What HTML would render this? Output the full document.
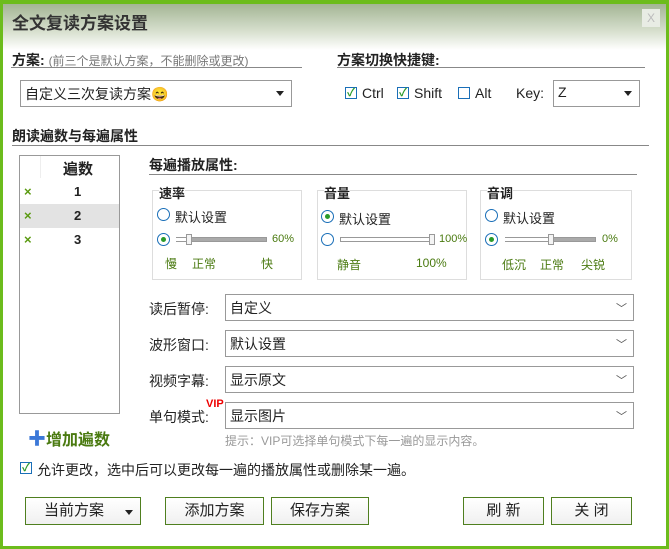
<!DOCTYPE html>
<html><head><meta charset="utf-8"><style>
*{box-sizing:border-box;margin:0;padding:0}
body{width:669px;height:549px;overflow:hidden;background:#fff;font-family:"Liberation Sans","Noto Sans CJK SC",sans-serif;font-size:13px;color:#222;position:relative}
.a{position:absolute;white-space:nowrap}
#frame{position:absolute;left:0;top:0;width:669px;height:549px;border:3px solid #6cbc1c;border-top-width:4px}
#title{position:absolute;left:3px;top:4px;width:663px;height:46px;background:linear-gradient(#a3b594,#d8e0cf 60%,#fff)}
.hl{position:absolute;height:1px;background:#888}
.dd{position:absolute;border:1px solid #999;background:#fff;font-size:14px;padding:3px 4px}
.dd .tri{position:absolute;right:7px;top:10px;width:0;height:0;border-left:4px solid transparent;border-right:4px solid transparent;border-top:5px solid #222}
.dd .chev{position:absolute;right:6px;top:5px;color:#555;font-size:11px}
.cb{position:absolute;width:12px;height:12px;border:1px solid #1a6fb8;background:#fff;color:#2a9a2a;font-size:11px;line-height:10px;text-align:center;font-weight:bold}
.grp{position:absolute;border:1px solid #ddd}
.rb{position:absolute;width:13px;height:13px;border:1px solid #1a6fb8;border-radius:50%;background:#fff}
.rb.on::after{content:"";position:absolute;left:3px;top:3px;width:5px;height:5px;border-radius:50%;background:#2a9a2a}
.sl{position:absolute;height:5px;border:1px solid #999;background:#aaa}
.th{position:absolute;width:6px;height:11px;border:1px solid #999;background:#f4f4f4}
.g{color:#4a7a10;font-size:12px}
.btn{position:absolute;top:497px;height:28px;border:1px solid #4f7f1f;background:linear-gradient(#fff,#f0f0f0);font-size:15px;text-align:center;line-height:26px}
</style></head><body>
<div id="title"></div>
<div class="a" style="left:12px;top:9px;font-size:17px;font-weight:bold;color:#333">全文复读方案设置</div>
<div class="a" style="left:642px;top:9px;width:18px;height:18px;background:#e8ece4;color:#bbb;font-size:12px;text-align:center;line-height:18px">X</div>

<div class="a" style="left:12px;top:50px;font-size:14px"><b>方案:</b> <span style="color:#777;font-size:12px">(前三个是默认方案，不能删除或更改)</span></div>
<div class="hl" style="left:11px;top:67px;width:291px"></div>
<div class="a" style="left:337px;top:50px;font-weight:bold;font-size:14px">方案切换快捷键:</div>
<div class="hl" style="left:337px;top:67px;width:308px"></div>

<div class="dd" style="left:20px;top:80px;width:272px;height:27px">自定义三次复读方案😄<span class="tri"></span></div>
<div class="cb" style="left:345px;top:87px">✓</div><div class="a" style="left:362px;top:85px;font-size:14px">Ctrl</div>
<div class="cb" style="left:397px;top:87px">✓</div><div class="a" style="left:414px;top:85px;font-size:14px">Shift</div>
<div class="cb" style="left:458px;top:87px"></div><div class="a" style="left:475px;top:85px;font-size:14px">Alt</div>
<div class="a" style="left:516px;top:85px;font-size:14px">Key:</div>
<div class="dd" style="left:553px;top:80px;width:87px;height:27px">Z<span class="tri"></span></div>

<div class="a" style="left:12px;top:126px;font-weight:bold;font-size:14px">朗读遍数与每遍属性</div>
<div class="hl" style="left:12px;top:145px;width:637px"></div>

<div class="a" style="left:19px;top:155px;width:101px;height:259px;border:1px solid #999"></div>
<div class="a" style="left:40px;top:156px;width:1px;height:22px;background:#eee"></div>
<div class="a" style="left:63px;top:158px;font-weight:bold;font-size:15px">遍数</div>
<div class="a" style="left:20px;top:204px;width:99px;height:24px;background:#e3e3e3"></div>
<div class="a" style="left:24px;top:184px;color:#5a9a10;font-weight:bold">×</div><div class="a" style="left:74px;top:184px;font-weight:bold">1</div>
<div class="a" style="left:24px;top:208px;color:#5a9a10;font-weight:bold">×</div><div class="a" style="left:74px;top:208px;font-weight:bold">2</div>
<div class="a" style="left:24px;top:232px;color:#5a9a10;font-weight:bold">×</div><div class="a" style="left:74px;top:232px;font-weight:bold">3</div>

<div class="a" style="left:28px;top:425px;color:#4a7a10;font-weight:bold;font-size:16px"><span style="color:#3b78d8;font-size:18px">✚</span>增加遍数</div>

<div class="a" style="left:149px;top:155px;font-weight:bold;font-size:14px">每遍播放属性:</div>
<div class="hl" style="left:149px;top:174px;width:488px"></div>

<div class="grp" style="left:152px;top:190px;width:150px;height:90px"></div>
<div class="a" style="left:159px;top:183px;font-weight:bold;background:#fff">速率</div>
<div class="rb" style="left:157px;top:208px"></div><div class="a" style="left:175px;top:207px">默认设置</div>
<div class="rb on" style="left:157px;top:233px"></div>
<div class="sl" style="left:176px;top:237px;width:91px"></div><div class="a" style="left:176px;top:238px;width:10px;height:3px;background:#fff"></div><div class="th" style="left:186px;top:234px"></div>
<div class="a g" style="left:272px;top:233px;font-size:11px">60%</div>
<div class="a g" style="left:165px;top:255px">慢</div><div class="a g" style="left:192px;top:255px">正常</div><div class="a g" style="left:261px;top:255px">快</div>

<div class="grp" style="left:317px;top:190px;width:150px;height:90px"></div>
<div class="a" style="left:324px;top:183px;font-weight:bold;background:#fff">音量</div>
<div class="rb on" style="left:321px;top:210px"></div><div class="a" style="left:339px;top:209px">默认设置</div>
<div class="rb" style="left:321px;top:233px"></div>
<div class="sl" style="left:340px;top:237px;width:92px;background:#fff"></div><div class="th" style="left:429px;top:234px"></div>
<div class="a g" style="left:439px;top:233px;font-size:11px">100%</div>
<div class="a g" style="left:337px;top:256px">静音</div><div class="a g" style="left:416px;top:256px">100%</div>

<div class="grp" style="left:480px;top:190px;width:152px;height:90px"></div>
<div class="a" style="left:487px;top:183px;font-weight:bold;background:#fff">音调</div>
<div class="rb" style="left:485px;top:209px"></div><div class="a" style="left:503px;top:208px">默认设置</div>
<div class="rb on" style="left:485px;top:233px"></div>
<div class="sl" style="left:505px;top:237px;width:91px"></div><div class="a" style="left:505px;top:238px;width:45px;height:3px;background:#fff"></div><div class="th" style="left:548px;top:234px"></div>
<div class="a g" style="left:602px;top:233px;font-size:11px">0%</div>
<div class="a g" style="left:502px;top:256px">低沉</div><div class="a g" style="left:540px;top:256px">正常</div><div class="a g" style="left:581px;top:256px">尖锐</div>

<div class="a" style="left:149px;top:299px;font-size:14px">读后暂停:</div>
<div class="dd" style="left:225px;top:294px;width:409px;height:27px">自定义<span class="chev">﹀</span></div>
<div class="a" style="left:149px;top:335px;font-size:14px">波形窗口:</div>
<div class="dd" style="left:225px;top:330px;width:409px;height:27px">默认设置<span class="chev">﹀</span></div>
<div class="a" style="left:149px;top:371px;font-size:14px">视频字幕:</div>
<div class="dd" style="left:225px;top:366px;width:409px;height:27px">显示原文<span class="chev">﹀</span></div>
<div class="a" style="left:149px;top:407px;font-size:14px">单句模式:</div>
<div class="a" style="left:206px;top:398px;color:#e00;font-size:11px;font-weight:bold">VIP</div>
<div class="dd" style="left:225px;top:402px;width:409px;height:27px">显示图片<span class="chev">﹀</span></div>
<div class="a" style="left:225px;top:432px;color:#999;font-size:12px">提示：VIP可选择单句模式下每一遍的显示内容。</div>

<div class="cb" style="left:20px;top:462px">✓</div>
<div class="a" style="left:37px;top:460px;font-size:14px">允许更改，选中后可以更改每一遍的播放属性或删除某一遍。</div>

<div class="btn" style="left:25px;width:116px;text-align:left;padding-left:18px">当前方案<span style="position:absolute;right:7px;top:12px;border-left:4px solid transparent;border-right:4px solid transparent;border-top:5px solid #222"></span></div>
<div class="btn" style="left:165px;width:99px">添加方案</div>
<div class="btn" style="left:271px;width:98px">保存方案</div>
<div class="btn" style="left:463px;width:81px">刷 新</div>
<div class="btn" style="left:551px;width:81px">关 闭</div>
<div id="frame"></div>
</body></html>
